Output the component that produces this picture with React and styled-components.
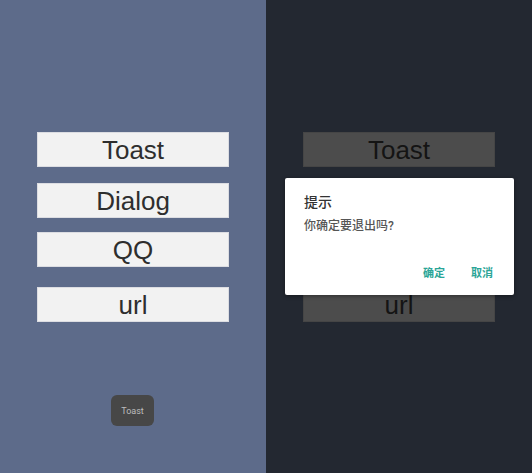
import styled, { createGlobalStyle } from "styled-components";

const GlobalStyle = createGlobalStyle`
  html, body {
    margin: 0;
    padding: 0;
    width: 532px;
    height: 473px;
    overflow: hidden;
    font-family: Roboto, "Noto Sans CJK SC", "Liberation Sans", sans-serif;
  }
`;

const Screen = styled.div`
  display: grid;
  grid-template-columns: 266px 266px;
  width: 532px;
  height: 473px;
`;

const Panel = styled.div`
  position: relative;
  display: flex;
  flex-direction: column;
  align-items: center;
  padding-top: 132px;
  background: ${(p) => (p.$dim ? "#232831" : "#5d6b8a")};
`;

const Button = styled.div`
  width: 192px;
  height: 35px;
  margin-top: ${(p) => p.$gap || 0}px;
  display: flex;
  align-items: center;
  justify-content: center;
  box-sizing: border-box;
  font-family: "Liberation Sans", Arial, sans-serif;
  font-size: 26px;
  line-height: 1;
  color: ${(p) => (p.$dim ? "#141414" : "#2e2e2e")};
  background: ${(p) => (p.$dim ? "#4c4c4c" : "#f2f2f2")};
  border: 1px solid ${(p) => (p.$dim ? "#454545" : "#dcdde2")};
`;

const Toast = styled.div`
  position: absolute;
  left: 111px;
  top: 395px;
  width: 43px;
  height: 31px;
  display: flex;
  align-items: center;
  justify-content: center;
  border-radius: 6px;
  background: #474747;
  color: #bdbdbd;
  font-size: 9px;
`;

const Dialog = styled.div`
  position: absolute;
  left: 19px;
  top: 178px;
  width: 229px;
  height: 117px;
  box-sizing: border-box;
  padding: 15px 19px 0;
  background: #ffffff;
  border-radius: 2px;
  box-shadow: 0 1px 4px rgba(0, 0, 0, 0.4);
  display: flex;
  flex-direction: column;
`;

const Title = styled.div`
  font-size: 14px;
  font-weight: 500;
  color: #333333;
  line-height: 18px;
`;

const Message = styled.div`
  margin-top: 7px;
  font-size: 12px;
  font-weight: 500;
  color: #555555;
  line-height: 16px;
`;

const Actions = styled.div`
  margin-top: auto;
  margin-bottom: 14px;
  display: flex;
  justify-content: flex-end;
  gap: 26px;
  padding-right: 2px;
`;

const Action = styled.span`
  font-size: 11px;
  font-weight: 700;
  color: #2ba597;
  line-height: 14px;
`;

const labels = [
  { text: "Toast", gap: 0 },
  { text: "Dialog", gap: 16 },
  { text: "QQ", gap: 14 },
  { text: "url", gap: 20 },
];

export default function App() {
  return (
    <>
      <GlobalStyle />
      <Screen>
        <Panel>
          {labels.map((l) => (
            <Button key={l.text} $gap={l.gap}>
              {l.text}
            </Button>
          ))}
          <Toast>Toast</Toast>
        </Panel>
        <Panel $dim>
          {labels.map((l) => (
            <Button key={l.text} $gap={l.gap} $dim>
              {l.text}
            </Button>
          ))}
          <Dialog>
            <Title>提示</Title>
            <Message>你确定要退出吗?</Message>
            <Actions>
              <Action>确定</Action>
              <Action>取消</Action>
            </Actions>
          </Dialog>
        </Panel>
      </Screen>
    </>
  );
}
